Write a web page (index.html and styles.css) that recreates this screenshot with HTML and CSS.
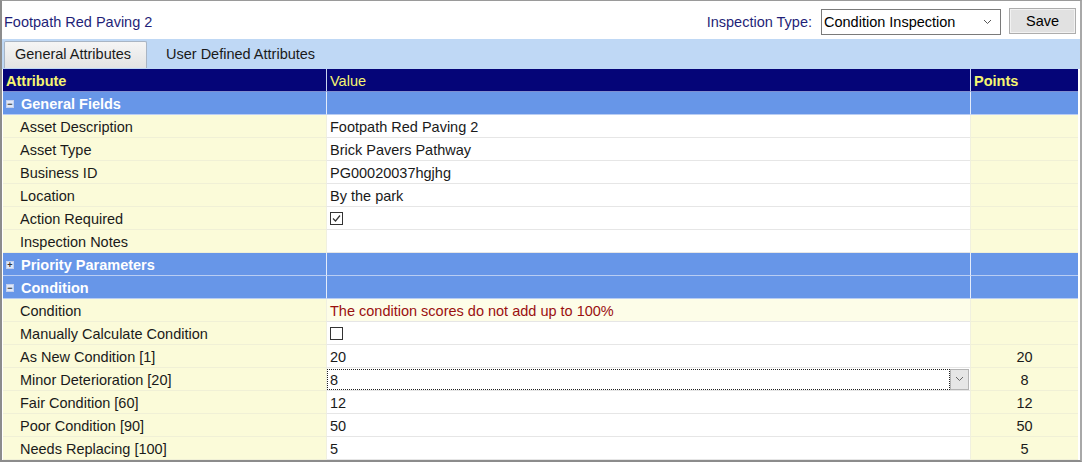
FILE: index.html
```html
<!DOCTYPE html>
<html>
<head>
<meta charset="utf-8">
<link rel="stylesheet" href="styles.css">
</head>
<body>
<div class="window">
  <div class="topbar">
    <div class="title">Footpath Red Paving 2</div>
    <div class="controls">
      <span class="label">Inspection Type:</span>
      <div class="select"><span>Condition Inspection</span>
        <svg class="chev" width="9" height="6" viewBox="0 0 9 6"><path d="M1 1 L4.5 4.5 L8 1" fill="none" stroke="#555" stroke-width="1"/></svg>
      </div>
      <div class="btn">Save</div>
    </div>
  </div>
  <div class="tabs">
    <div class="tab active">General Attributes</div>
    <div class="tab">User Defined Attributes</div>
  </div>
  <div class="grid">
    <div class="row head"><div class="c a b">Attribute</div><div class="c v">Value</div><div class="c p b">Points</div></div>

    <div class="row group"><div class="c a"><span class="tog">−</span>General Fields</div><div class="c v"></div><div class="c p"></div></div>
    <div class="row"><div class="c a">Asset Description</div><div class="c v">Footpath Red Paving 2</div><div class="c p"></div></div>
    <div class="row"><div class="c a">Asset Type</div><div class="c v">Brick Pavers Pathway</div><div class="c p"></div></div>
    <div class="row"><div class="c a">Business ID</div><div class="c v">PG00020037hgjhg</div><div class="c p"></div></div>
    <div class="row"><div class="c a">Location</div><div class="c v">By the park</div><div class="c p"></div></div>
    <div class="row"><div class="c a">Action Required</div><div class="c v"><span class="cb"><svg width="11" height="11" viewBox="0 0 11 11"><path d="M2 5.5 L4.5 8 L9 2.5" fill="none" stroke="#333" stroke-width="1.2"/></svg></span></div><div class="c p"></div></div>
    <div class="row"><div class="c a">Inspection Notes</div><div class="c v"></div><div class="c p"></div></div>

    <div class="row group"><div class="c a"><span class="tog">+</span>Priority Parameters</div><div class="c v"></div><div class="c p"></div></div>
    <div class="row group"><div class="c a"><span class="tog">−</span>Condition</div><div class="c v"></div><div class="c p"></div></div>
    <div class="row"><div class="c a">Condition</div><div class="c v ro warn">The condition scores do not add up to 100%</div><div class="c p"></div></div>
    <div class="row"><div class="c a">Manually Calculate Condition</div><div class="c v"><span class="cb"></span></div><div class="c p"></div></div>
    <div class="row"><div class="c a">As New Condition [1]</div><div class="c v">20</div><div class="c p">20</div></div>
    <div class="row"><div class="c a">Minor Deterioration [20]</div><div class="c v edit"><span class="focus">8</span><span class="dd"><svg width="9" height="6" viewBox="0 0 9 6"><path d="M1 1 L4.5 4.5 L8 1" fill="none" stroke="#666" stroke-width="1"/></svg></span></div><div class="c p">8</div></div>
    <div class="row"><div class="c a">Fair Condition [60]</div><div class="c v">12</div><div class="c p">12</div></div>
    <div class="row"><div class="c a">Poor Condition [90]</div><div class="c v">50</div><div class="c p">50</div></div>
    <div class="row"><div class="c a">Needs Replacing [100]</div><div class="c v">5</div><div class="c p">5</div></div>
  </div>
</div>
</body>
</html>
```

FILE: styles.css
```css
* { box-sizing: border-box; }
body {
  margin: 0;
  background: #fff;
  font-family: "Liberation Sans", Arial, sans-serif;
  font-size: 14.5px;
  color: #1a1a1a;
}
.window {
  width: 1082px;
  height: 462px;
  border-top: 1px solid #9a9a9a;
  border-left: 2px solid #8c8c8c;
  border-right: 2px solid #a8a8a8;
  border-bottom: 2px solid #8c8c8c;
  overflow: hidden;
  display: flex;
  flex-direction: column;
}
.topbar {
  height: 38px;
  flex: none;
  display: flex;
  align-items: center;
  justify-content: space-between;
  padding: 0 4px 0 2px;
}
.title {
  color: #1f1f78;
  margin-top: 4px;
}
.controls {
  display: flex;
  align-items: center;
  margin-top: 4px;
}
.label {
  color: #1f1f78;
  margin-right: 9px;
}
.select {
  width: 180px;
  height: 26px;
  border: 1px solid #7a7a7a;
  display: flex;
  align-items: center;
  justify-content: space-between;
  padding: 0 8px 0 2px;
  color: #000;
  background: #fff;
}
.btn {
  margin-left: 8px;
  width: 67px;
  height: 26px;
  margin-top: -2px;
  border: 1px solid #adadad;
  background: #e1e1e1;
  box-shadow: inset 0 0 0 1px #f2f2f2;
  display: flex;
  align-items: center;
  justify-content: center;
  color: #000;
}
.tabs {
  height: 30px;
  flex: none;
  background: #bfd8f5;
  display: flex;
  align-items: flex-end;
  padding-left: 2px;
  padding-bottom: 1px;
}
.tab {
  height: 27px;
  display: flex;
  align-items: center;
  padding: 0 12px 2px;
  color: #1a1a1a;
}
.tab.active {
  width: 143px;
  padding: 0 0 2px 10px;
  border: 1px solid #a9b5c4;
  border-bottom: none;
  border-radius: 2px 2px 0 0;
  background: linear-gradient(#f5f5f5, #e3e3e3);
  margin-right: 7px;
}
.grid {
  margin-left: 1px;
  width: 1075px;
  flex: none;
  display: flex;
  flex-direction: column;
}
.row {
  height: 23px;
  flex: none;
  display: grid;
  grid-template-columns: 323px 644px 108px;
}
.c {
  display: flex;
  align-items: center;
  padding-top: 1px;
  border-bottom: 1px solid #e6e6e6;
  overflow: hidden;
  white-space: nowrap;
}
.c.a {
  background: #fbfbd9;
  padding-left: 17px;
  border-bottom-color: #f0f0d6;
}
.c.v {
  background: #fff;
  padding-left: 3px;
  border-left: 1px solid #f0f0e0;
}
.c.v.ro { background: #fdfde8; }
.c.p {
  background: #fbfbd9;
  justify-content: center;
  border-left: 1px solid #f0f0e0;
  border-bottom-color: #f0f0d6;
}
.warn { color: #9a1010; }
.row.head .c {
  background: #050578;
  color: #f5f570;
  border-bottom: 1px solid #7f8fd0;
  border-left: 1px solid #c9d3ee;
  padding-left: 3px;
}
.row.head .c.a { border-left: none; padding-left: 3px; }
.row.head .c.p { justify-content: flex-start; }
.b { font-weight: bold; }
.row.group .c {
  background: #6796e8;
  color: #fff;
  font-weight: bold;
  border-bottom: 1px solid #b9cdf3;
  border-left: 1px solid #e4ecfb;
}
.row.group .c.a {
  border-left: none;
  padding-left: 3px;
}
.tog {
  width: 8px;
  height: 8px;
  background: #dfe7f8;
  border: 1px solid #c3d0ee;
  color: #333;
  font-size: 9px;
  line-height: 6px;
  text-align: center;
  margin-right: 7px;
  font-weight: bold;
}
.cb {
  width: 13px;
  height: 13px;
  border: 1px solid #333;
  background: #fff;
  display: flex;
  align-items: center;
  justify-content: center;
}
.c.v.edit {
  padding-left: 0;
  padding-right: 1px;
  padding-top: 0;
}
.focus {
  flex: 1;
  height: 21px;
  border: 1px dotted #222;
  display: flex;
  align-items: center;
  padding-left: 2px;
  padding-top: 1px;
}
.dd {
  width: 19px;
  height: 21px;
  background: #e6e6e6;
  border: 1px solid #b4b4b4;
  display: flex;
  align-items: center;
  justify-content: center;
}
```
